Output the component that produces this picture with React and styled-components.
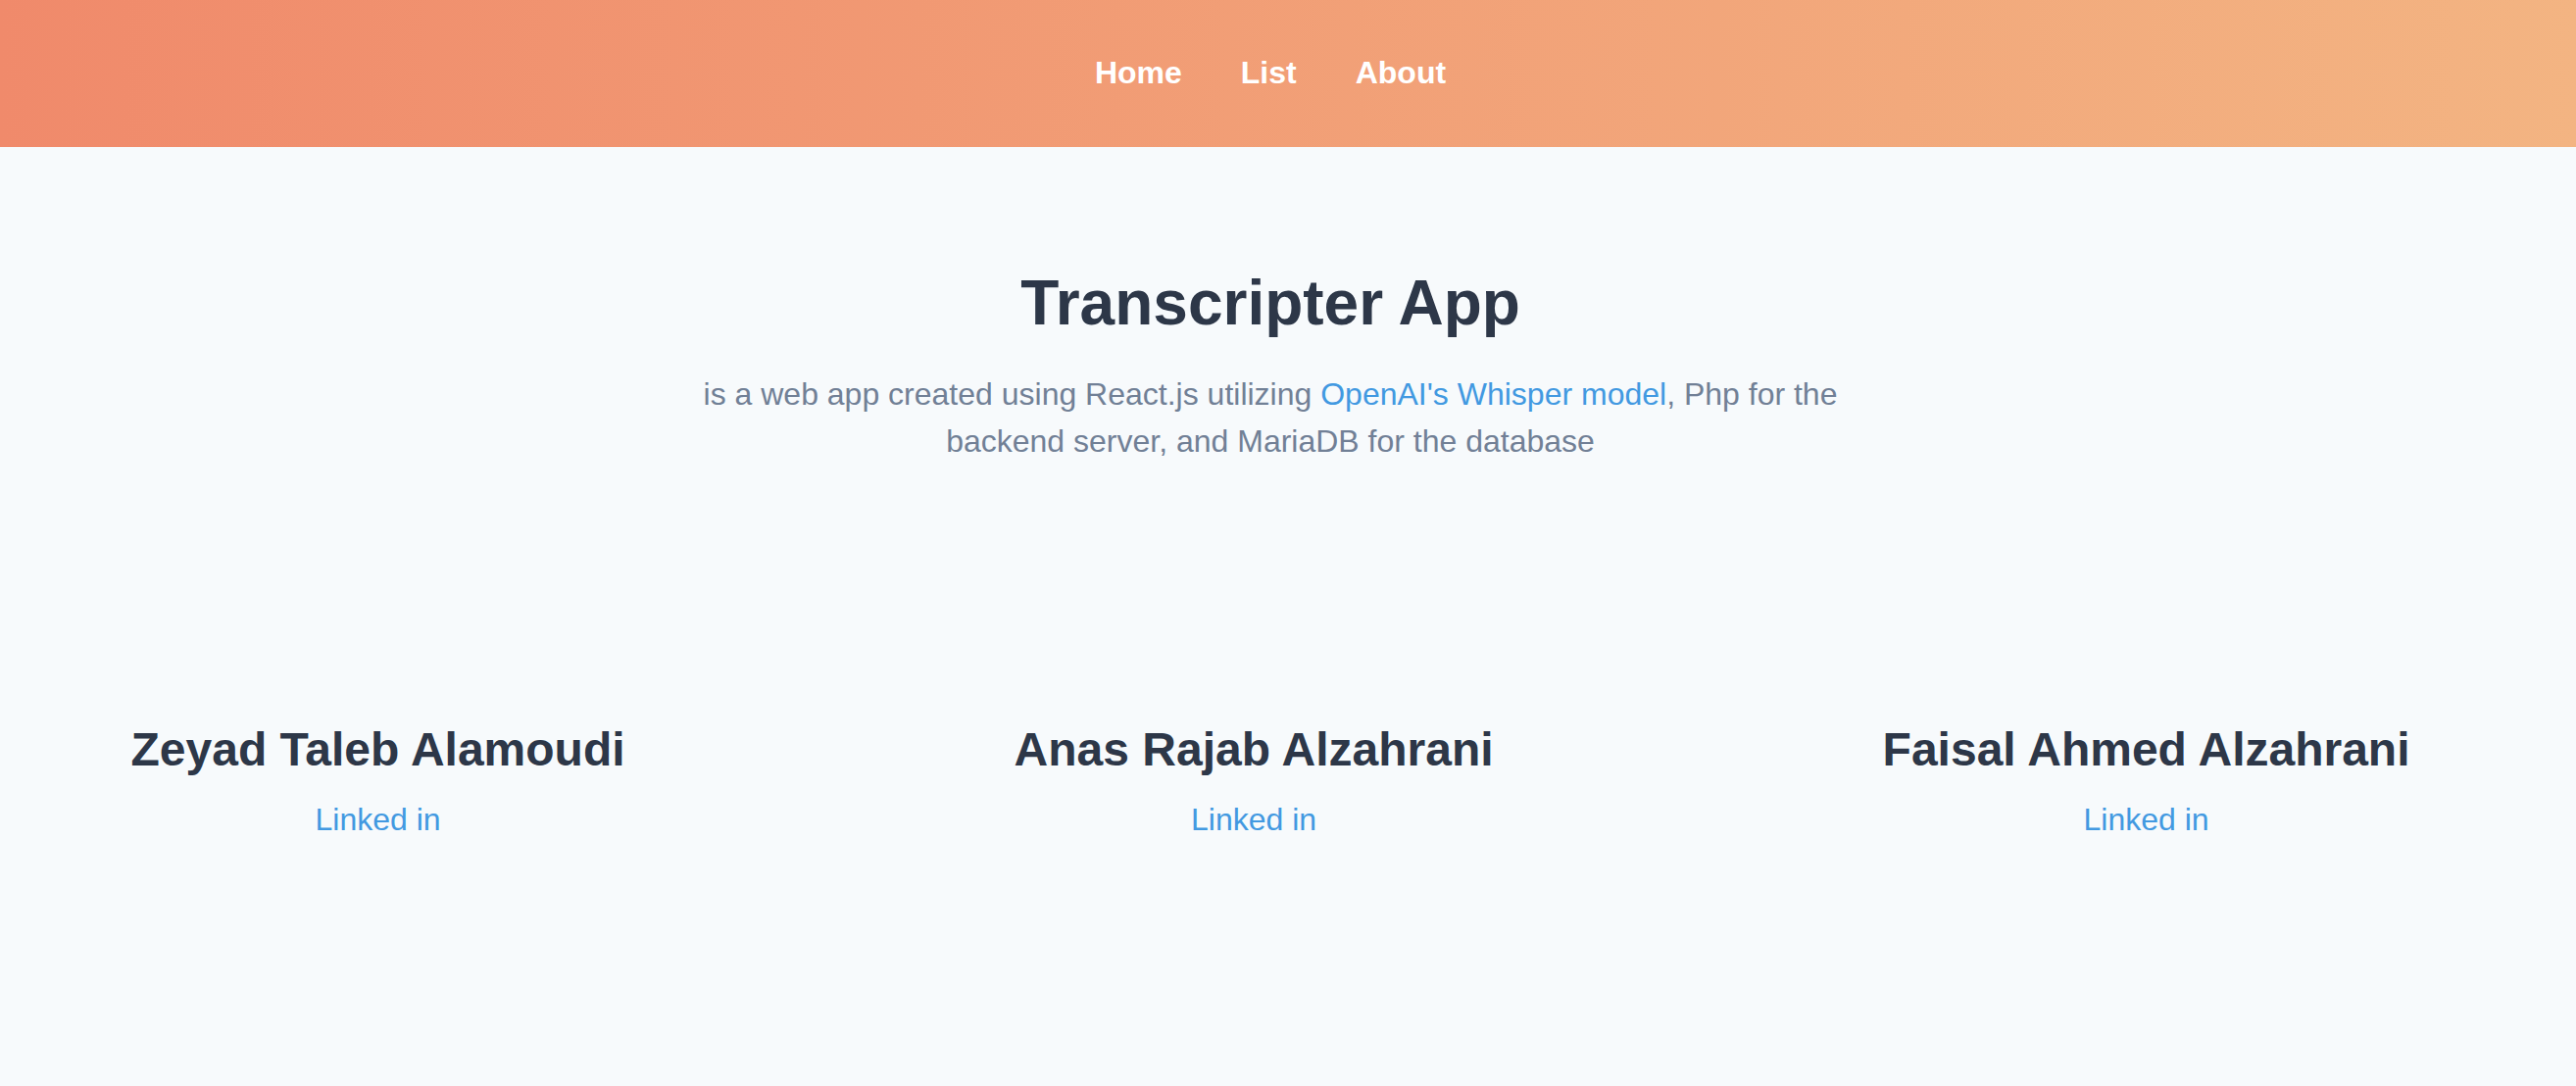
import styled, { createGlobalStyle } from "styled-components";

const GlobalStyle = createGlobalStyle`
  html, body {
    margin: 0;
    padding: 0;
    background: #f7fafc;
    font-family: "Liberation Sans", Arial, sans-serif;
    min-height: 100%;
  }
`;

const Header = styled.header`
  height: 150px;
  box-sizing: border-box;
  display: flex;
  align-items: center;
  justify-content: center;
  padding: 0 36px 2px 0;
  background: linear-gradient(to right, #f08a6b, #f3b482);
`;

const Nav = styled.nav`
  display: flex;
  gap: 60px;
`;

const NavLink = styled.a`
  color: #ffffff;
  font-size: 32px;
  font-weight: bold;
  text-decoration: none;
  cursor: pointer;
`;

const Main = styled.main`
  padding-right: 36px;
`;

const Intro = styled.section`
  padding-top: 122px;
  text-align: center;
`;

const Title = styled.h1`
  margin: 0;
  font-size: 64px;
  font-weight: bold;
  color: #2d3748;
`;

const Subtitle = styled.p`
  margin: 32px auto 0;
  max-width: 1200px;
  font-size: 32px;
  line-height: 48px;
  color: #718096;
`;

const Highlight = styled.a`
  color: #4299e1;
  text-decoration: none;
`;

const Team = styled.section`
  margin-top: 263px;
  display: flex;
  justify-content: center;
  gap: 397px;
`;

const Member = styled.div`
  text-align: center;
`;

const Name = styled.h2`
  margin: 0;
  font-size: 48px;
  font-weight: bold;
  color: #2d3748;
`;

const Profile = styled.a`
  display: block;
  margin-top: 26px;
  font-size: 32px;
  color: #4299e1;
  text-decoration: none;
`;

const members = [
  "Zeyad Taleb Alamoudi",
  "Anas Rajab Alzahrani",
  "Faisal Ahmed Alzahrani",
];

export default function App() {
  return (
    <>
      <GlobalStyle />
      <Header>
        <Nav>
          <NavLink>Home</NavLink>
          <NavLink>List</NavLink>
          <NavLink>About</NavLink>
        </Nav>
      </Header>

      <Main>
        <Intro>
          <Title>Transcripter App</Title>
          <Subtitle>
            is a web app created using React.js utilizing{" "}
            <Highlight>OpenAI's Whisper model</Highlight>, Php for the backend
            server, and MariaDB for the database
          </Subtitle>
        </Intro>

        <Team>
          {members.map((name) => (
            <Member key={name}>
              <Name>{name}</Name>
              <Profile>Linked in</Profile>
            </Member>
          ))}
        </Team>
      </Main>
    </>
  );
}
